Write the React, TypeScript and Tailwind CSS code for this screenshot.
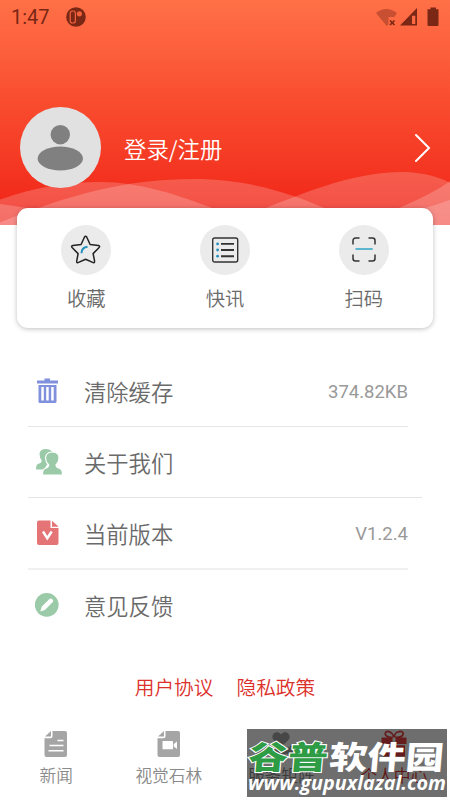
import type { ReactNode } from "react";

function StatusBar() {
  return (
    <div className="flex h-[34px] items-center text-[#7a2715]">
      <span className="ml-[11px] w-[40px] font-['Roboto',sans-serif] text-[20px] leading-none">1:47</span>
      <svg className="ml-[15px]" width="20" height="20" viewBox="0 0 20 20">
        <circle cx="10" cy="10" r="9.8" fill="currentColor" />
        <rect x="4.2" y="4" width="5.2" height="12" rx="2.300" fill="none" stroke="#f0613c" strokeWidth="1.200" />
        <circle cx="13.4" cy="6.8" r="2.6" fill="#f0613c" />
      </svg>
      <svg className="ml-auto mr-[10px]" width="64" height="22" viewBox="0 0 64 22">
        <path d="M0 7Q10 -1 21 7L18.3 11H12.5V18.5L10.7 20Z" fill="#c94f32" />
        <path d="M14 14.5l4.5 4.5M18.5 14.5l-4.5 4.5" stroke="currentColor" strokeWidth="1.7" />
        <path fillRule="evenodd" d="M24 19.5L41 2V19.5ZM36 9.8V18h3.3V9.8Z" fill="currentColor" />
        <path d="M54.5 1.5h5.5v1.8h2.5V19a1 1 0 0 1-1 1h-9a1 1 0 0 1-1-1V3.300h3Z" fill="currentColor" />
      </svg>
    </div>
  );
}

function Waves() {
  return (
    <svg className="absolute inset-x-0 bottom-0" width="450" height="55" viewBox="0 170 450 55">
      <g fill="#fff" fillOpacity="0.2">
        <path d="M0 199.500C35 187 68 182 100 182C140 182 178 195 212 208L255 225H0Z" />
        <path d="M0 222.500C70 194 128 179 194 179C244 179 288 192 322 207L360 225H0Z" />
        <path d="M220 225C270 210 335 172 403 172C422 172 440 177 450 183V225Z" />
        <path d="M360 225C398 208 430 196 450 181V225Z" />
        <path d="M0 204C15 206 30 208 50 213L80 225H0Z" />
        <path d="M390 225C410 211 430 207 450 200V225Z" />
      </g>
    </svg>
  );
}

function StarIcon() {
  return (
    <svg width="32" height="32" viewBox="0 0 32 32" fill="none" strokeLinecap="round" strokeLinejoin="round">
      <path
        d="M14.400 3.200Q15.600 1.200 16.800 3.200L20.100 10.500L28.300 11.600Q30.600 12.200 28.900 13.800L23.100 19.600L24.600 27.200Q24.600 29.400 22.600 28.400L15.600 25.200L8.600 28.400Q6.500 29.400 6.700 27.200L8.100 19.600L2.300 13.800Q0.600 12.200 2.900 11.600L11.100 10.500Z"
        stroke="#222"
        strokeWidth="1.500"
      />
      <path d="M11.500 19.300C11.500 15.500 13.500 13.100 17.500 12.700" stroke="#2590bd" strokeWidth="2" strokeLinecap="butt" />
    </svg>
  );
}

function ListIcon() {
  return (
    <svg width="28" height="28" viewBox="0 0 28 28" fill="none">
      <rect x="1.700" y="2" width="25" height="24" rx="2" stroke="#333" strokeWidth="1.400" />
      <path d="M10 7.900H23M10 14H23M10 20.200H23" stroke="#333" strokeWidth="1.900" />
      <g fill="#2590bd">
        <circle cx="6.600" cy="7.900" r="1.400" />
        <circle cx="6.600" cy="14" r="1.400" />
        <circle cx="6.600" cy="20.200" r="1.400" />
      </g>
    </svg>
  );
}

function ScanIcon() {
  return (
    <svg width="28" height="28" viewBox="0 0 28 28" fill="none">
      <path
        d="M3 8.500V4.500a2.500 2.500 0 0 1 2.500-2.500H9.500M18.500 2H22.500a2.500 2.500 0 0 1 2.500 2.500V8.500M25 18.500V22.500a2.500 2.500 0 0 1-2.500 2.500H18.500M9.500 25H5.500a2.500 2.500 0 0 1-2.500-2.500V18.500"
        stroke="#333"
        strokeWidth="1.500"
      />
      <path d="M5.500 13H22.700" stroke="#56b4cc" strokeWidth="1.900" />
    </svg>
  );
}

function TrashIcon() {
  return (
    <svg width="28" height="28" viewBox="0 0 28 28" fill="#8190dc">
      <path d="M9.500 1.500h5.500v2h8v3H2v-3h7.500Z" />
      <path fillRule="evenodd" d="M3.500 8H21.500V24.500a1.500 1.500 0 0 1-1.500 1.500h-15a1.500 1.500 0 0 1-1.500-1.500ZM6.300 10V23.500h2.500V10ZM11.200 10V23.500h2.500V10ZM16.200 10V23.500h2.500V10Z" />
    </svg>
  );
}

function PeopleIcon() {
  return (
    <svg width="28" height="28" viewBox="0 0 28 28" fill="#9acaa7">
      <path d="M10.500 1C6 1 4 4 4.800 7.700C5 10 5.800 11.300 6.700 12.200C6.700 14.500 5.500 15.200 3.500 15.800Q1 16.500 1 21.500H9L15 12L17 3.500C15.500 1.800 13 1 10.500 1Z" />
      <path
        d="M17.300 4C11.800 4 10 7.500 10.800 11.500C11 13.800 12.300 15.700 13.700 16.700C13.700 19 12.200 19.800 10 20.500C8 21.100 7.500 23 7.500 27H27.500C27.500 23 26.900 21.200 24.900 20.500C22.200 19.700 21 19 21 16.700C22.400 15.700 23.600 13.800 23.800 11.500C24.600 7.500 22.800 4 17.300 4Z"
        stroke="#fff"
        strokeWidth="1.200"
      />
    </svg>
  );
}

function VersionIcon() {
  return (
    <svg width="28" height="28" viewBox="0 0 28 28">
      <path d="M4 1.500H15.500V9H23.500V24a2 2 0 0 1-2 2H4a2 2 0 0 1-2-2V3.500a2 2 0 0 1 2-2Z" fill="#e47475" />
      <path d="M17 1.700L23.700 7.700H17Z" fill="#e47475" />
      <path d="M8 12.500L12.300 19.300L16.700 12.500" fill="none" stroke="#fff" strokeWidth="2.500" />
    </svg>
  );
}

function PencilIcon() {
  return (
    <svg width="28" height="28" viewBox="0 0 28 28">
      <circle cx="11.700" cy="13.800" r="11.900" fill="#9acaa7" />
      <path d="M5.300 20.400L6.800 15.600L14.700 7.800Q16 6.800 17.400 8.200Q18.900 9.600 17.800 11L9.900 18.900Z" fill="#fff" />
    </svg>
  );
}

function DocIcon({ video = false }: { video?: boolean }) {
  return (
    <svg width="24" height="28" viewBox="0 0 24 28" fill="#a5a5a5">
      <path d="M8.500 1H21a2 2 0 0 1 2 2V25a2 2 0 0 1-2 2H2.500a2 2 0 0 1-2-2V8.200H6.500a2 2 0 0 0 2-2Z" />
      <path d="M7 1V6.500H1Z" />
      {video ? (
        <g fill="#fff">
          <rect x="5.500" y="11" width="10.500" height="8.300" rx=".6" />
          <path d="M16.700 14L20 11.500V19L16.700 16.600Z" />
        </g>
      ) : (
        <path d="M13.500 10.500H19.500M5.500 15.500H19.500M4.500 20.800H19.500" stroke="#fff" strokeWidth="1.500" />
      )}
    </svg>
  );
}

function HeartIcon() {
  return (
    <svg width="28" height="28" viewBox="0 0 28 28" fill="#a5a5a5">
      <path d="M14 17L7 10.500C2 5 9.500-1 14 4.500C18.500-1 26 5 21 10.500Z" />
      <path d="M2 14L14 23L26 14V24H2Z" />
    </svg>
  );
}

function GiftIcon() {
  return (
    <svg width="28" height="28" viewBox="0 0 28 28">
      <path d="M14 7C2 9 4-1 10 2Q13 3.500 14 7C15 3.500 16 2 18 2C25-1 26 9 14 7Z" fill="none" stroke="#e8403c" strokeWidth="1.700" />
      <path d="M1.500 7.500H26.500V14H1.500ZM3 15.300H25V26.500H3Z" fill="#e84441" />
      <path d="M14 7.500V26.500" stroke="#fff" strokeWidth="3" />
    </svg>
  );
}

const actions = [
  { label: "收藏", icon: <StarIcon /> },
  { label: "快讯", icon: <ListIcon /> },
  { label: "扫码", icon: <ScanIcon /> },
];

const tabs = [
  { label: "新闻", icon: <DocIcon /> },
  { label: "视觉石林", icon: <DocIcon video /> },
  { label: "服务矩阵", icon: <HeartIcon /> },
  { label: "个人中心", icon: <GiftIcon />, active: true },
];

function MenuRow({ icon, label, value }: { icon: ReactNode; label: string; value?: string }) {
  return (
    <div className="flex h-[70px] items-center pl-[7px]">
      {icon}
      <span className="ml-[21px] text-[22.3px] font-[350] leading-none text-[#6a6a6a]">{label}</span>
      {value && (
        <span className="ml-auto mr-[14px] pt-[2px] font-['Roboto',sans-serif] text-[18.5px] leading-none text-[#999]">
          {value}
        </span>
      )}
    </div>
  );
}

function Watermark() {
  return (
    <div className="absolute left-[247px] top-[729px] h-[68px] w-[200px] bg-black/57">
      <svg width="200" height="68" viewBox="0 0 200 68">
        <g fontFamily="'Noto Sans CJK SC', sans-serif" fontWeight="900" fontSize="32" transform="translate(4 0) skewX(-5)">
          <text
            transform="translate(0 39.500) scale(1.240 1)"
            fill="#2e9b45"
            stroke="#fff"
            strokeWidth="2"
            paintOrder="stroke"
          >
            谷普
          </text>
          <text transform="translate(81 39.500) scale(1.190 1)" fill="#fff">
            软件园
          </text>
        </g>
        <text
          x="1"
          y="61"
          textLength="198"
          lengthAdjust="spacingAndGlyphs"
          fill="#fff"
          fontFamily="'Open Sans', sans-serif"
          fontStyle="italic"
          fontWeight="700"
          fontSize="19.500"
        >
          www.gupuxlazal.com
        </text>
      </svg>
    </div>
  );
}

export default function App() {
  return (
    <div className="relative flex h-[800px] w-[450px] flex-col overflow-hidden bg-white font-['Noto_Sans_CJK_SC',sans-serif]">
      {/* Header */}
      <header className="relative h-[225px] shrink-0 bg-linear-to-b from-[#ff7047] via-[#f94c2f] via-45% to-[#f01b14]">
        <Waves />
        <div className="relative">
          <StatusBar />
          <div className="mt-[73px] flex items-center pl-[20px] pr-[19px]">
            <svg width="81" height="82" viewBox="0 0 81 82">
              <circle cx="40.500" cy="40.500" r="40.500" fill="#e1e1e1" />
              <circle cx="40.300" cy="27.700" r="9.700" fill="#808080" />
              <ellipse cx="40.300" cy="51.500" rx="22.700" ry="12" fill="#808080" />
            </svg>
            <span className="ml-[23px] text-[22.400px] font-[350] leading-none text-white">登录/注册</span>
            <svg className="ml-auto" width="17" height="30" viewBox="0 0 17 30">
              <path d="M2 2L15 15L2 28" fill="none" stroke="#fff" strokeWidth="2" strokeLinecap="round" />
            </svg>
          </div>
        </div>
      </header>

      {/* Shortcuts */}
      <section className="relative z-10 mx-[17px] -mt-[17px] flex h-[120px] shrink-0 rounded-[11px] bg-white shadow-[0_1px_5px_rgba(0,0,0,0.25)]">
        {actions.map((a) => (
          <div key={a.label} className="flex flex-1 flex-col items-center pt-[17px]">
            <div className="flex size-[50px] items-center justify-center rounded-full bg-[#ebebeb]">{a.icon}</div>
            <span className="mt-[14px] text-[19.3px] font-[350] leading-none text-[#6a6a6a]">{a.label}</span>
          </div>
        ))}
      </section>

      {/* Menu */}
      <section className="mx-[28px] mt-[28px]">
        <MenuRow icon={<TrashIcon />} label="清除缓存" value="374.82KB" />
        <div className="mr-[14px] h-px bg-[#e5e5e5]" />
        <MenuRow icon={<PeopleIcon />} label="关于我们" />
        <div className="h-px bg-[#e5e5e5]" />
        <MenuRow icon={<VersionIcon />} label="当前版本" value="V1.2.4" />
        <div className="mr-[14px] h-[2px] bg-[#f0f0f0]" />
        <MenuRow icon={<PencilIcon />} label="意见反馈" />
      </section>

      <div className="mt-[37px] flex justify-center gap-[23px] text-[19.700px] font-[350] leading-none text-[#dc302b]">
        <span>用户协议</span>
        <span>隐私政策</span>
      </div>

      {/* Tab bar */}
      <nav className="mt-auto flex h-[70px] shrink-0">
        {tabs.map((t) => (
          <div key={t.label} className="flex flex-1 flex-col items-center">
            {t.icon}
            <span
              className={`mt-[9px] text-[16.700px] font-[350] leading-none ${t.active ? "text-[#dc302b]" : "text-[#8a8a8a]"}`}
            >
              {t.label}
            </span>
          </div>
        ))}
      </nav>

      <Watermark />
    </div>
  );
}
